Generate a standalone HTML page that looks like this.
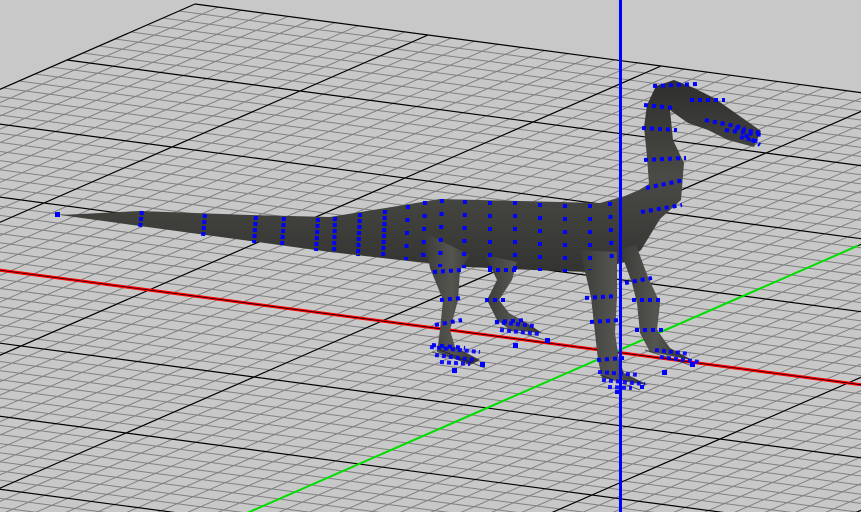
<!DOCTYPE html>
<html><head><meta charset="utf-8"><style>
html,body{margin:0;padding:0;background:#c8c8c8;width:861px;height:512px;overflow:hidden;}
svg{display:block;}
</style></head><body>
<svg id="s" width="861" height="512" viewBox="0 0 861 512" xmlns="http://www.w3.org/2000/svg">
<defs>
<linearGradient id="bg" x1="0" y1="0" x2="0" y2="1">
<stop offset="0" stop-color="#2e2e2c"/><stop offset="0.5" stop-color="#4a4a46"/><stop offset="1" stop-color="#333331"/>
</linearGradient>
<linearGradient id="lg" x1="0" y1="0" x2="1" y2="0">
<stop offset="0" stop-color="#3a3a38"/><stop offset="0.5" stop-color="#555550"/><stop offset="1" stop-color="#2e2e2c"/>
</linearGradient>
</defs>
<rect width="861" height="512" fill="#c8c8c8"/>
<g id="grid"></g>
<g id="axes"></g>
<g fill="url(#bg)">
<path d="M60,215 L140,211 L250,215 L330,217 L410,204 L440,199 L520,201 L600,203 L625,196 L639,190 L649,184 L647,157 L644,127 L647,105 L656,86 L674,80 L694,88 L714,98 L761,131 L754,147 L728,140 L708,130 L688,123 L674,113 L670,110 L673,140 L684,163 L681,200 L660,219 L641,250 L625,262 L587,272 L533,270 L467,267 L400,260 L330,252 L250,241 L140,226 Z"/>
</g>
<g fill="url(#lg)">
<path d="M423,232 L470,255 L460,270 L458,300 L450,330 L455,347 L480,360 L470,365 L437,352 L440,330 L443,300 L430,268 Z"/>
<path d="M485,255 L517,262 L512,280 L499,300 L509,313 L527,323 L542,333 L510,330 L497,320 L487,300 L497,280 Z"/>
<path d="M580,250 L617,252 L617,297 L615,333 L619,360 L624,373 L648,385 L602,378 L598,360 L595,333 L591,297 Z"/>
<path d="M620,250 L636,245 L648,277 L660,303 L657,330 L670,348 L692,360 L650,352 L640,333 L637,303 L632,283 Z"/>
</g>
<g stroke="#111" stroke-width="1" opacity="0.6" fill="none">
<path d="M432,352 L470,362 M440,350 L485,368 M500,327 L545,340 M600,375 L640,390 M645,350 L690,365"/>
</g>
<g stroke="#0000ff" stroke-width="4" fill="none" stroke-dasharray="4 2">
<path d="M142,211 L140,228"/><path d="M205,214 L203,237"/><path d="M256,216 L254,243"/><path d="M284,217 L282,247"/>
<path d="M318,218 L316,251"/><path d="M335,217 L334,253"/><path d="M360,213 L358,256"/><path d="M385,210 L383,258"/>
</g>
<g stroke="#0000ff" stroke-width="4" fill="none" stroke-dasharray="4 9">
<path d="M408,205 L406,260"/><path d="M425,201 L423,264"/><path d="M442,199 L440,267"/><path d="M465,200 L464,268"/>
<path d="M490,201 L490,269"/><path d="M515,201 L515,270"/><path d="M540,203 L540,271"/><path d="M565,204 L565,272"/>
<path d="M590,204 L590,270"/><path d="M610,202 L612,264"/>
</g>
<g stroke="#0000ff" stroke-width="4" fill="none" stroke-dasharray="4 4">
<path d="M641,212 L682,205"/><path d="M646,188 L684,180"/><path d="M644,160 L686,158"/><path d="M642,128 L677,130"/>
<path d="M644,105 L674,108"/><path d="M653,86 L697,84"/><path d="M690,100 L725,100"/><path d="M705,120 L745,128"/>
<path d="M725,130 L762,135"/><path d="M745,135 L760,145"/>
<path d="M433,272 L462,270"/><path d="M440,300 L462,298"/><path d="M435,325 L462,320"/><path d="M432,345 L465,348"/>
<path d="M488,270 L517,270"/><path d="M485,300 L507,300"/><path d="M495,322 L527,320"/>
<path d="M585,298 L617,296"/><path d="M590,322 L620,320"/><path d="M597,360 L624,358"/>
<path d="M625,283 L652,278"/><path d="M632,300 L662,300"/><path d="M635,330 L664,330"/>
</g>
<g stroke="#0000ff" stroke-width="4" fill="none" stroke-dasharray="4 3" opacity="0.9">
<path d="M430,347 L480,352 M435,355 L475,360 M440,362 L470,364"/>
<path d="M495,322 L535,326 M500,330 L540,334"/>
<path d="M598,372 L640,375 M602,380 L645,384 M608,387 L632,388"/>
<path d="M655,350 L690,354 M660,357 L700,362"/>
<path d="M735,128 L762,133 M740,137 L760,142"/>
</g>
<g fill="#0000ff">
<rect x="55" y="212" width="5" height="5"/>
<rect x="480" y="362" width="5" height="5"/><rect x="452" y="368" width="5" height="5"/>
<rect x="545" y="338" width="5" height="5"/><rect x="513" y="343" width="5" height="5"/>
<rect x="615" y="390" width="4" height="4"/><rect x="640" y="385" width="4" height="4"/>
<rect x="690" y="362" width="5" height="5"/><rect x="662" y="370" width="5" height="5"/>
</g>
<rect x="619" y="0" width="3" height="512" fill="#0000ff"/>
</svg>
<script>
(function(){
var O=[615,352],A=[233,31],B=[-128,56];
function P(u,v){return [O[0]+u*A[0]+v*B[0],O[1]+u*A[1]+v*B[1]];}
var g=document.getElementById('grid'),s='';
function ln(p,q,c,w){s+='<line x1="'+p[0].toFixed(1)+'" y1="'+p[1].toFixed(1)+'" x2="'+q[0].toFixed(1)+'" y2="'+q[1].toFixed(1)+'" stroke="'+c+'" stroke-width="'+w+'"/>';}
for(var i=-40;i<=40;i++){var u=i/10;if(i%10==0)continue;ln(P(u,-4),P(u,4),'#808080',1);}
for(var j=-32;j<=32;j++){var v=j/8;if(j%8==0)continue;ln(P(-4,v),P(4,v),'#808080',1);}
for(var k=-4;k<=4;k++){ln(P(k,-4),P(k,4),'#000',1.2);ln(P(-4,k),P(4,k),'#000',1.2);}
g.innerHTML=s;s='';
ln(P(-4,0),P(4,0),'#ff0000',3);
ln(P(-4,0),P(4,0),'#000',0.7);
ln(P(0,-1.9),P(0,4),'#00dd00',2);
document.getElementById('axes').innerHTML=s;
})();
</script>
</body></html>
